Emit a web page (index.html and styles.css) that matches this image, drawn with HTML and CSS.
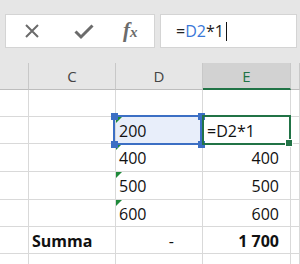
FILE: index.html
```html
<!DOCTYPE html>
<html>
<head>
    <title>Summa</title>
    <link rel="stylesheet" href="styles.css">
</head>
<body>

    <!-- formelfält -->
    <div class="formula-area">
        <div class="fx-tools">
            <svg class="tool" width="16" height="16" viewBox="0 0 16 16">
                <path d="M2 2 L14 14 M14 2 L2 14" stroke="#6b6b6b" stroke-width="2" fill="none"/>
            </svg>
            <svg class="tool" width="20" height="16" viewBox="0 0 20 16">
                <path d="M1.5 7.5 L7 13 L18.5 1.5" stroke="#6b6b6b" stroke-width="3" fill="none"/>
            </svg>
            <span class="fx">f<small>x</small></span>
        </div>
        <div class="fx-input">=<span class="ref">D2</span>*1<span class="caret"></span></div>
    </div>

    <!-- kalkylblad -->
    <div class="sheet">
        <div class="hd"></div>
        <div class="hd">C</div>
        <div class="hd">D</div>
        <div class="hd active">E</div>
        <div class="hd"></div>

        <div class="c"></div><div class="c"></div><div class="c"></div><div class="c"></div><div class="c"></div>

        <div class="c"></div><div class="c"></div><div class="c txt ref-cell">200</div><div class="c edit">=D2*1</div><div class="c"></div>

        <div class="c"></div><div class="c"></div><div class="c txt">400</div><div class="c num">400</div><div class="c"></div>

        <div class="c"></div><div class="c"></div><div class="c txt">500</div><div class="c num">500</div><div class="c"></div>

        <div class="c"></div><div class="c"></div><div class="c txt">600</div><div class="c num">600</div><div class="c"></div>

        <div class="c"></div><div class="c bold">Summa</div><div class="c dash">-</div><div class="c num bold">1 700</div><div class="c"></div>

        <div class="c"></div><div class="c"></div><div class="c"></div><div class="c"></div><div class="c"></div>

        <!-- markering -->
        <div class="range-box"></div>
        <div class="handle h1"></div>
        <div class="handle h2"></div>
        <div class="handle h3"></div>
        <div class="handle h4"></div>
        <div class="active-box"></div>
        <div class="fill-handle"></div>
    </div>

</body>
</html>
```

FILE: styles.css
```css
body { margin: 0; background: #fff; font-family: "Open Sans", "Liberation Sans", sans-serif; overflow: hidden; }

/* formelfält */
.formula-area { height: 63px; background: #e6e6e6; display: flex; gap: 5px; padding: 14px 3px 0 5px; box-sizing: border-box; align-items: flex-start; }
.fx-tools { width: 150px; height: 34px; box-sizing: border-box; background: #fff; border: 1px solid #d4d4d4; display: flex; align-items: center; padding-left: 18px; }
.fx-tools .tool:first-child { margin-right: 34px; }
.fx-tools .tool + .tool { margin-right: 29px; margin-top: 2px; }
.fx { font-family: "Liberation Serif", serif; font-style: italic; font-weight: bold; color: #6b6b6b; font-size: 21px; line-height: 22px; }
.fx small { font-size: 15px; }
.fx-input { flex: 1; height: 34px; box-sizing: border-box; background: #fff; border: 1px solid #d4d4d4; padding-left: 15px; font-size: 16px; line-height: 32px; color: #222; display: flex; align-items: center; }
.ref { color: #3a78d8; }
.caret { display: inline-block; width: 1px; height: 19px; background: #111; margin-left: 2px; }

/* kalkylblad */
.sheet { position: relative; height: 201px; overflow: hidden; display: grid; grid-template-columns: 29px 87px 87px 88px 1fr; grid-template-rows: 27px 27px 27px 28px 28px 27px 27px 27px; }
.hd { background: #e6e6e6; border-right: 1px solid #c8c8c8; border-bottom: 1px solid #bdbdbd; box-sizing: border-box; text-align: center; font-size: 15px; line-height: 26px; color: #444; }
.hd.active { background: #d2d2d2; color: #217346; border-bottom: 2px solid #217346; }
.c { position: relative; border-right: 1px solid #d9d9d9; border-bottom: 1px solid #d9d9d9; box-sizing: border-box; font-size: 16px; line-height: 20px; padding: 4px 3px 0; color: #111; white-space: nowrap; }
.num { text-align: right; padding-right: 11px; }
.dash { text-align: right; padding-right: 28px; }
.bold { font-weight: bold; }
.edit { padding-left: 4px; }
.ref-cell { background: #e8eefa; }
.txt::before { content: ""; position: absolute; left: 0; top: 0; border-top: 6px solid #1f8a3b; border-right: 6px solid transparent; }

/* markering */
.range-box { position: absolute; left: 113px; top: 52px; width: 89px; height: 30px; border: 2px solid #3c6fc4; box-sizing: border-box; }
.handle { position: absolute; width: 7px; height: 7px; background: #3c6fc4; }
.h1 { left: 111px; top: 50px; }
.h2 { left: 111px; top: 78px; }
.h3 { left: 198px; top: 50px; }
.h4 { left: 198px; top: 78px; }
.active-box { position: absolute; left: 202px; top: 52px; width: 89px; height: 30px; border: 2px solid #217346; box-sizing: border-box; }
.fill-handle { position: absolute; left: 285px; top: 76px; width: 6px; height: 6px; background: #217346; border: 1px solid #fff; }
```
